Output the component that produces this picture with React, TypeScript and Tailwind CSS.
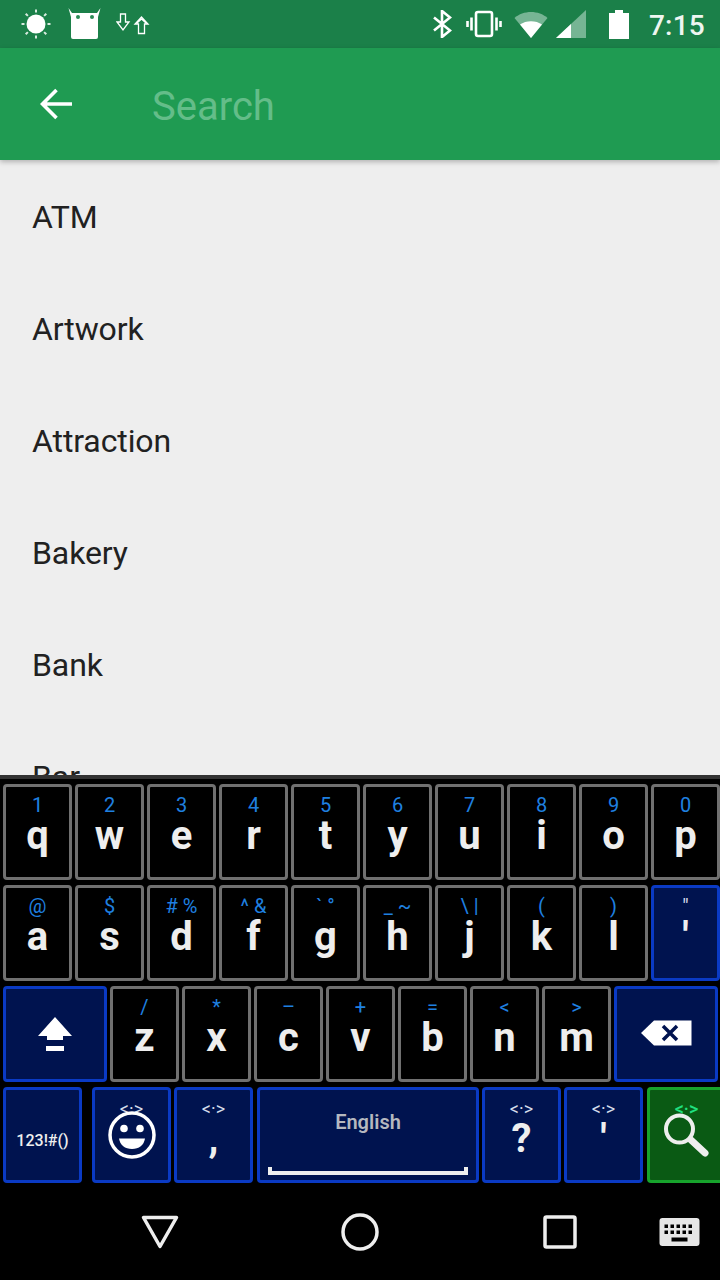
const font = { fontFamily: "Roboto, sans-serif" };

function Key({ hint, label, w = "w-[69px]", alt = false, green = false, hintClass = "text-[20px] text-[#1f80e0]", children }: { hint?: string; label?: string; w?: string; alt?: boolean; green?: boolean; hintClass?: string; children?: React.ReactNode }) {
  const tone = green ? "border-[#17a32c] bg-[#0a5a14]" : alt ? "border-[#0a3ac4] bg-[#00134f]" : "border-[#707070] bg-black";
  return (
    <div className={`${w} h-full shrink-0 rounded-[4px] border-[3px] flex flex-col items-center pt-[9px] ${tone}`}>
      <div className={`h-[20px] leading-[19px] whitespace-pre ${hintClass}`}>{hint}</div>
      {label ? <div className="h-[40px] leading-[40px] text-[40px] font-bold text-[#eeeeee]">{label}</div> : null}
      {children}
    </div>
  );
}

function IconKey({ w, children }: { w: string; children: React.ReactNode }) {
  return (
    <div className={`${w} h-full shrink-0 rounded-[4px] border-[3px] flex flex-col items-center justify-center border-[#0a3ac4] bg-[#00134f]`}>
      {children}
    </div>
  );
}

const row1 = [["1","q"],["2","w"],["3","e"],["4","r"],["5","t"],["6","y"],["7","u"],["8","i"],["9","o"],["0","p"]];
const row2 = [["@","a"],["$","s"],["# %","d"],["^ &","f"],["` °","g"],["_ ~","h"],["\\ |","j"],["(","k"],[")","l"]];
const row3 = [["/","z"],["*","x"],["–","c"],["+","v"],["=","b"],["<","n"],[">","m"]];
const items = ["ATM","Artwork","Attraction","Bakery","Bank","Bar"];
const altHint = "text-[18px] leading-[17px] text-[#d5dcea]";

function StatusBar() {
  return (
    <div className="h-[48px] bg-[#1b8049] flex items-center shrink-0">
      <svg className="ml-[20px]" width="32" height="32" viewBox="0 0 32 32">
        <circle cx="16" cy="16" r="9.500" fill="#fff" />
        <g stroke="#d8eadf" strokeWidth="2">
          <path d="M16 1.500v3M16 27.500v3M1.500 16h3M27.500 16h3M5.700 5.700l2.200 2.200M24.100 24.100l2.200 2.200M5.700 26.300l2.200-2.200M24.100 7.900l2.200-2.200" />
        </g>
      </svg>
      <svg className="ml-[16px]" width="33" height="32" viewBox="0 0 33 32">
        <path d="M0.500 0L4 5H29L32.500 0L30 9V29a2 2 0 0 1-2 2H5a2 2 0 0 1-2-2V9z" fill="#fff" />
        <circle cx="10" cy="9" r="2" fill="#2a8a55" />
        <circle cx="24" cy="9" r="2" fill="#2a8a55" />
      </svg>
      <svg className="ml-[15px]" width="34" height="22" viewBox="0 0 34 22">
        <path d="M4.500 1h5v8h3.500l-6 8-6-8h3.500z" fill="none" stroke="#fff" strokeWidth="1.300" />
        <path d="M22.500 20.500v-9.500H19l6.500-7 6.500 7h-3.500v9.500zM21 10l4.500-4 4.500 4" fill="none" stroke="#fff" strokeWidth="1.300" />
      </svg>
      <svg className="ml-[282px]" width="20" height="28" viewBox="0 0 20 28">
        <path d="M2 7.500l16 13L10 27V1l8 6.500L2 20.500" fill="none" stroke="#fff" strokeWidth="2.600" />
      </svg>
      <svg className="ml-[14px]" width="36" height="28" viewBox="0 0 36 28">
        <rect x="10" y="2" width="16" height="24" rx="2" fill="none" stroke="#fff" strokeWidth="2.600" />
        <path d="M5.500 7.500v13M1.500 11v6M30.500 7.500v13M34.500 11v6" stroke="#fff" strokeWidth="2.600" />
      </svg>
      <svg className="ml-[12px]" width="34" height="28" viewBox="0 0 34 28">
        <path d="M0.500 8C9 0 25 0 33.500 8L17 28z" fill="#76b594" />
        <path d="M6 14.500c6-4.500 16-4.500 22 0L17 28z" fill="#fff" />
      </svg>
      <svg className="ml-[8px]" width="30" height="28" viewBox="0 0 30 28">
        <path d="M0 28L30 0v28z" fill="#76b594" />
        <path d="M0 28L15 14v14z" fill="#fff" />
      </svg>
      <svg className="ml-[23px]" width="20" height="29" viewBox="0 0 20 29">
        <path d="M6 0h8v3h6v26H0V3h6z" fill="#fff" />
      </svg>
      <span className="ml-[20px] mt-[3px] text-[28px] font-medium text-[#eef6f1] tracking-[0.2px] leading-none" style={font}>7:15</span>
    </div>
  );
}

function Smile() {
  return (
    <svg className="-mt-[8px]" width="48" height="48" viewBox="0 0 48 48">
      <circle cx="24" cy="24" r="22" fill="none" stroke="#fff" strokeWidth="3.500" />
      <circle cx="16" cy="17.500" r="3.800" fill="#fff" />
      <circle cx="32" cy="17.500" r="3.800" fill="#fff" />
      <path d="M11 27.500h26c-1 6.500-6 10.500-13 10.500s-12-4-13-10.500z" fill="#fff" />
    </svg>
  );
}

export default function App() {
  return (
    <div className="w-[720px] h-[1280px] flex flex-col overflow-hidden bg-black" style={font}>
      <StatusBar />
      <div className="h-[112px] shrink-0 bg-[#1f9b52] flex items-center shadow-[0_2px_5px_rgba(0,0,0,0.25)] z-10">
        <svg className="ml-[40px]" width="33" height="32" viewBox="0 0 33 32">
          <path d="M32 16H3M16.500 2L2.500 16l14 14" fill="none" stroke="#fff" strokeWidth="3.600" />
        </svg>
        <span className="ml-[79px] mt-[5px] text-[40px] text-[#64bd89]">Search</span>
      </div>
      <div className="h-[615px] shrink-0 bg-[#eeeeee] overflow-hidden pl-[32px] pt-[1px]">
        {items.map((t) => (
          <div key={t} className="h-[112px] flex items-center text-[32px] tracking-[-0.1px] text-[#212121]">{t}</div>
        ))}
      </div>
      <div className="h-[4px] shrink-0 bg-[#333333]" />
      <div className="shrink-0 flex flex-col px-[3px] pt-[5px]">
        <div className="h-[96px] flex gap-[3px]">
          {row1.map(([h, l]) => <Key key={l} hint={h} label={l} />)}
        </div>
        <div className="h-[96px] mt-[5px] flex gap-[3px]">
          {row2.map(([h, l]) => <Key key={l} hint={h} label={l} />)}
          <Key alt hint={'"'} label="'" hintClass="text-[20px] text-[#d5dcea]" />
        </div>
        <div className="h-[96px] mt-[5px] flex gap-[3px]">
          <IconKey w="w-[104px]">
            <svg width="36" height="36" viewBox="0 0 36 36">
              <path d="M18 1L35 20H26V24H10V20H1z" fill="#fff" />
              <rect x="9" y="30" width="18" height="5" fill="#fff" />
            </svg>
          </IconKey>
          {row3.map(([h, l]) => <Key key={l} hint={h} label={l} />)}
          <IconKey w="w-[104px]">
            <svg className="mb-[2px]" width="52" height="26" viewBox="0 0 52 26">
              <path d="M14 0.500H51.500V25.500H14L1 13z" fill="#fff" />
              <path d="M23 6l14 14M37 6L23 20" stroke="#00134f" strokeWidth="3.500" />
            </svg>
          </IconKey>
        </div>
        <div className="h-[96px] mt-[5px] flex w-[720px]">
          <IconKey w="w-[79px]"><span className="text-[16px] font-medium text-[#eeeeee] mt-[12px]">123!#()</span></IconKey>
          <div className="ml-[10px] h-full">
            <Key alt w="w-[79px]" hint="<·>" hintClass={altHint}><Smile /></Key>
          </div>
          <div className="ml-[3px] h-full">
            <Key alt w="w-[79px]" hint="<·>" hintClass={altHint} label="," />
          </div>
          <div className="ml-[4px] h-full">
            <div className="w-[222px] h-full rounded-[4px] border-[3px] border-[#0a3ac4] bg-[#00134f] flex flex-col items-center">
              <span className="mt-[20px] text-[20px] leading-[24px] font-semibold text-[#b5b8bf]">English</span>
              <div className="mt-[33px] w-[200px] h-[8px] border-x-[4px] border-b-[4px] border-[#eeeeee]" />
            </div>
          </div>
          <div className="ml-[3px] h-full">
            <Key alt w="w-[79px]" hint="<·>" hintClass={altHint} label="?" />
          </div>
          <div className="ml-[3px] h-full">
            <Key alt w="w-[79px]" hint="<·>" hintClass={altHint} label="'" />
          </div>
          <div className="ml-[4px] h-full">
            <Key green w="w-[79px]" hint="<·>" hintClass="text-[18px] leading-[17px] font-medium text-[#1fe080]">
              <svg className="-mt-[9px] -ml-[3px]" width="50" height="48" viewBox="0 0 50 48">
                <circle cx="19.500" cy="19" r="13.500" fill="none" stroke="#eeeeee" strokeWidth="4" />
                <path d="M31 30l14 13" stroke="#eeeeee" strokeWidth="7" strokeLinecap="round" />
              </svg>
            </Key>
          </div>
        </div>
      </div>
      <div className="flex-1 flex items-center">
        <svg className="ml-[141px]" width="38" height="34" viewBox="0 0 38 34">
          <path d="M2.500 2.500h33L19 31.500z" fill="none" stroke="#eeeeee" strokeWidth="3.500" strokeLinejoin="round" />
        </svg>
        <svg className="ml-[162px]" width="38" height="38" viewBox="0 0 38 38">
          <circle cx="19" cy="19" r="17" fill="none" stroke="#eeeeee" strokeWidth="3.500" />
        </svg>
        <svg className="ml-[164px]" width="34" height="34" viewBox="0 0 34 34">
          <rect x="2" y="2" width="30" height="30" rx="1.500" fill="none" stroke="#eeeeee" strokeWidth="3.500" />
        </svg>
        <svg className="ml-[82px]" width="41" height="30" viewBox="0 0 41 30">
          <rect x="0.500" y="1" width="40" height="28" rx="3" fill="#e6e6e6" />
          <path d="M5.500 7.500h3.500v3.500H5.500zM11.500 7.500H15v3.500h-3.500zM17.500 7.500H21v3.500h-3.500zM23.500 7.500H27v3.500h-3.500zM29.500 7.500H33v3.500h-3.500zM5.500 13.500h3.500V17H5.500zM11.500 13.500H15V17h-3.500zM17.500 13.500H21V17h-3.500zM23.500 13.500H27V17h-3.500zM29.500 13.500H33V17h-3.500zM12.500 20.500h16v4h-16z" fill="#000" />
        </svg>
      </div>
    </div>
  );
}
